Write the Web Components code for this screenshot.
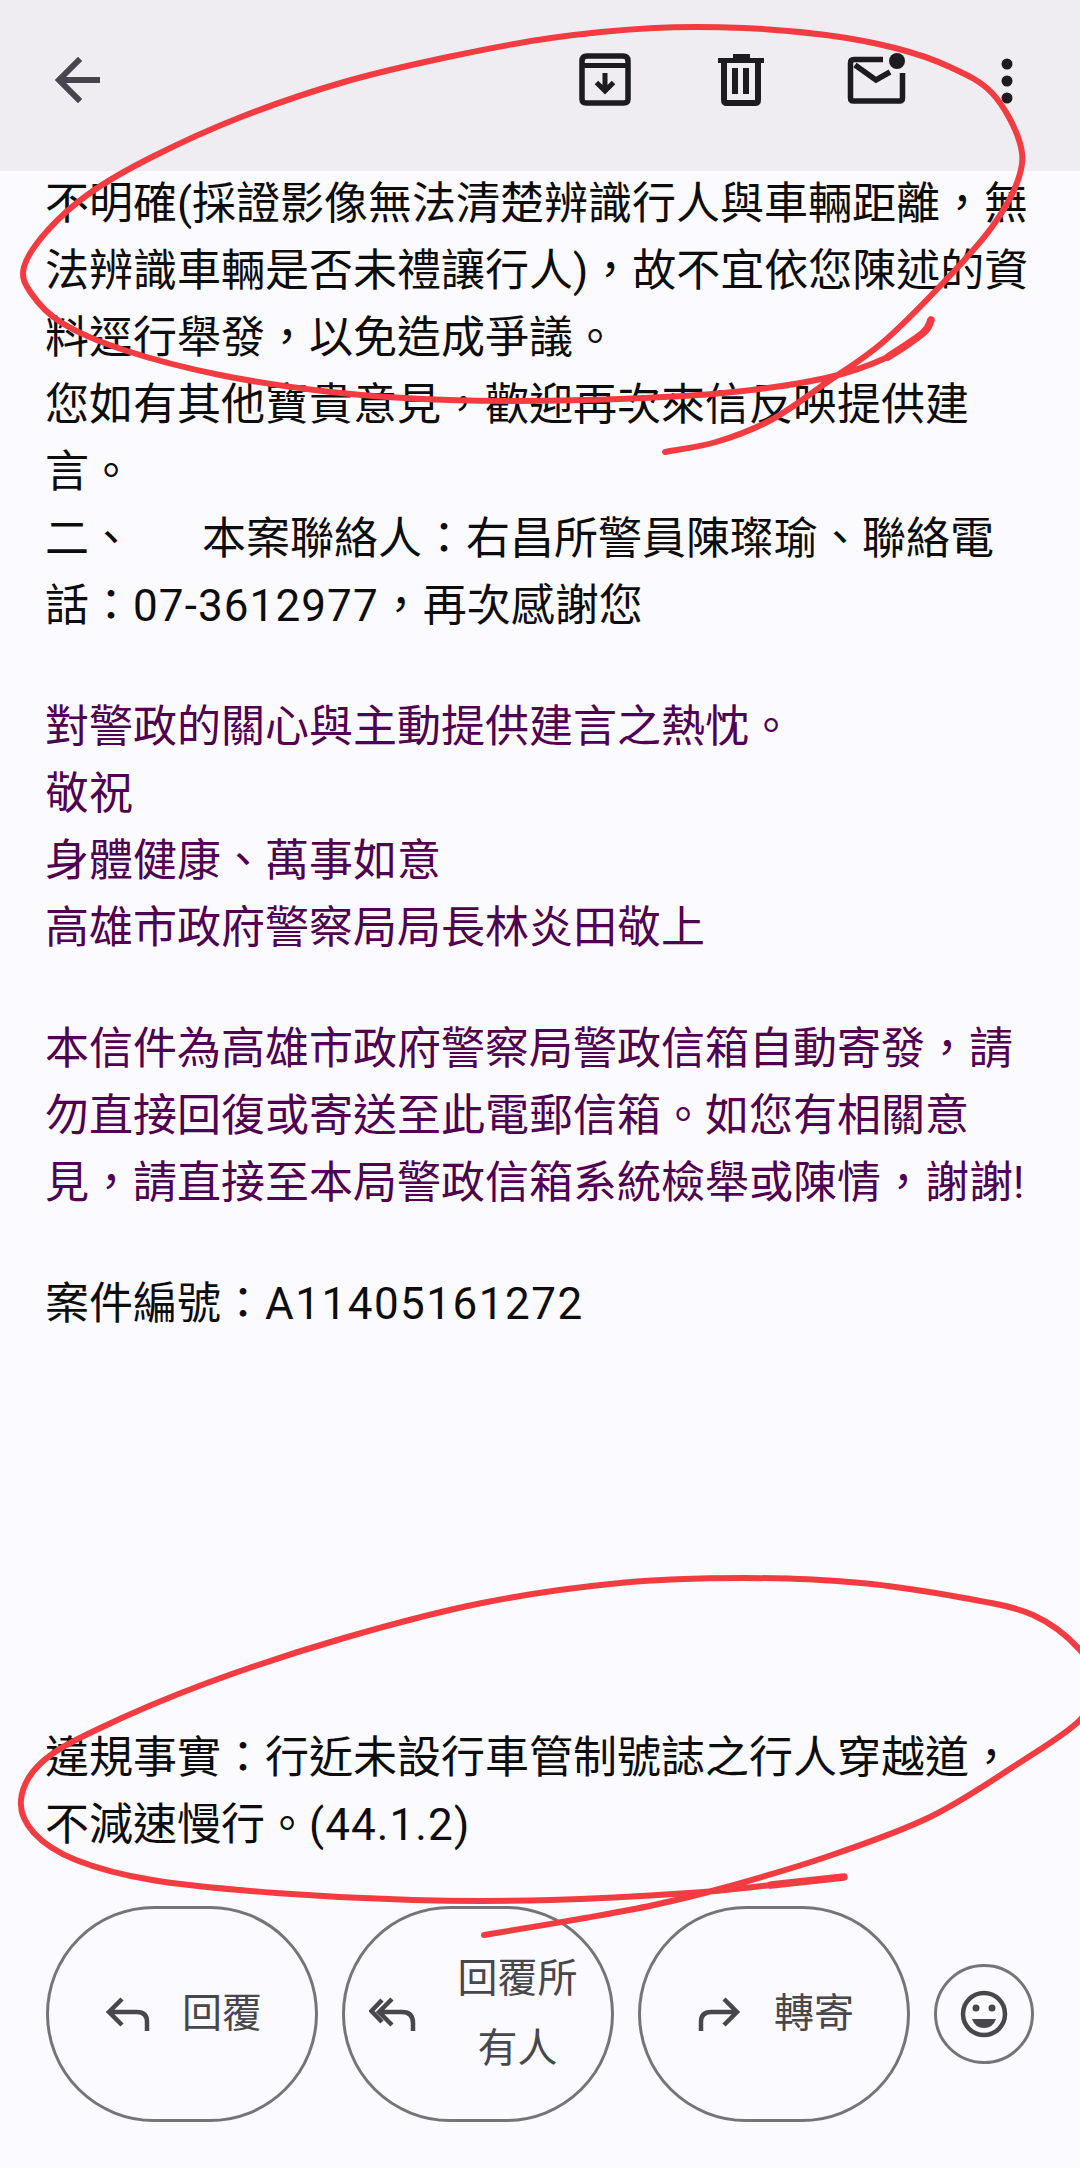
<!DOCTYPE html>
<html lang="zh-Hant">
<head>
<meta charset="utf-8">
<title>郵件</title>
<style>
  html, body { margin: 0; padding: 0; background: #fbfafe; }
  body { font-family: Roboto, "Noto Sans CJK TC", sans-serif; }
</style>
</head>
<body>
<mail-page>
  <mail-toolbar slot="top"></mail-toolbar>
  <mail-para first>不明確(採證影像無法清楚辨識行人與車輛距離&#xFF0C;無<br>法辨識車輛是否未禮讓行人)&#xFF0C;故不宜依您陳述的資<br>料逕行舉發&#xFF0C;以免造成爭議。<br>您如有其他寶貴意見&#xFF0C;歡迎再次來信反映提供建<br>言。<br>二、<mail-gap></mail-gap>本案聯絡人&#xFF1A;右昌所警員陳璨瑜、聯絡電<br>話&#xFF1A;<mail-latin>07-3612977</mail-latin>&#xFF0C;再次感謝您</mail-para>
  <mail-para quoted>對警政的關心與主動提供建言之熱忱。<br>敬祝<br>身體健康、萬事如意<br>高雄市政府警察局局長林炎田敬上</mail-para>
  <mail-para quoted>本信件為高雄市政府警察局警政信箱自動寄發&#xFF0C;請<br>勿直接回復或寄送至此電郵信箱。如您有相關意<br>見&#xFF0C;請直接至本局警政信箱系統檢舉或陳情&#xFF0C;謝謝!</mail-para>
  <mail-para>案件編號&#xFF1A;<mail-latin wide>A11405161272</mail-latin></mail-para>
  <mail-para far>違規事實&#xFF1A;行近未設行車管制號誌之行人穿越道&#xFF0C;<br>不減速慢行。<mail-latin>(44.1.2)</mail-latin></mail-para>
  <mail-actions slot="bottom">
    <mail-action icon="reply">回覆</mail-action>
    <mail-action icon="replyall">回覆所有人</mail-action>
    <mail-action icon="forward">轉寄</mail-action>
    <mail-emoji></mail-emoji>
  </mail-actions>
  <ink-marks slot="over"></ink-marks>
</mail-page>

<script>
customElements.define('mail-page', class extends HTMLElement {
  constructor() {
    super();
    this.attachShadow({mode: 'open'}).innerHTML = `
      <style>
        :host { display: flex; flex-direction: column; position: relative; width: 1080px; height: 2168px; overflow: hidden; background: #fbfafe; }
        main { padding: 0 45px; }
        .bottom { margin-top: auto; }
      </style>
      <slot name="top"></slot>
      <main><slot></slot></main>
      <div class="bottom"><slot name="bottom"></slot></div>
      <slot name="over"></slot>
    `;
  }
});

customElements.define('mail-toolbar', class extends HTMLElement {
  constructor() {
    super();
    this.attachShadow({mode: 'open'}).innerHTML = `
      <style>
        :host { display: flex; box-sizing: border-box; height: 171px; padding: 47px 40px 0 45px; background: #efedf1; flex: none; }
        svg { width: 66px; height: 66px; display: block; flex: none; }
        .right { margin-left: auto; display: flex; gap: 70px; }
        .dots { margin-left: -6px; }
      </style>
      <svg viewBox="0 0 66 66" fill="none" stroke="#49454f" stroke-width="6" stroke-linecap="square">
        <path d="M16 33H52M33 14L14 33l19 19" stroke-linejoin="miter"/>
      </svg>
      <div class="right">
        <svg viewBox="0 0 66 66" fill="none" stroke="#1c1b1f" stroke-width="5.5">
          <path d="M10 14q0-5 5-5h36q5 0 5 5v38q0 4-4 4H14q-4 0-4-4z"/>
          <path d="M10 18.5h46" stroke-width="5"/>
          <path d="M33 26v18M24.500 35.500L33 44l8.500-8.500" stroke-width="5"/>
        </svg>
        <svg viewBox="0 0 66 66" fill="#1c1b1f">
          <path d="M25 7h17v4h14v5H10v-5h15z"/>
          <path d="M16 16v37q0 3 3 3h28q3 0 3-3V16" fill="none" stroke="#1c1b1f" stroke-width="6"/>
          <path d="M24 21h6v26h-6zM35 21h6v26h-6z"/>
        </svg>
        <svg viewBox="0 0 66 66" fill="none" stroke="#1c1b1f" stroke-width="5.500">
          <path d="M39 12.500H10q-3.500 0-3.500 3.500v35q0 3 3 3h46q3 0 3-3V26"/>
          <path d="M11 18l21 15 14-8"/>
          <circle cx="53" cy="14" r="8" fill="#1c1b1f" stroke="none"/>
        </svg>
        <svg class="dots" viewBox="0 0 66 66" fill="#1c1b1f">
          <circle cx="33" cy="17" r="5.500"/><circle cx="33" cy="34" r="5.500"/><circle cx="33" cy="51" r="5.500"/>
        </svg>
      </div>
    `;
  }
});

customElements.define('mail-para', class extends HTMLElement {
  constructor() {
    super();
    this.attachShadow({mode: 'open'}).innerHTML = `
      <style>
        :host { display: block; font-size: 44px; line-height: 67px; color: #0d0d0d; white-space: nowrap; margin-top: 54px; }
        :host([first]) { margin-top: 0; }
        :host([quoted]) { color: #500050; }
        :host([far]) { margin-top: 387px; }
      </style>
      <slot></slot>
    `;
  }
});

customElements.define('mail-gap', class extends HTMLElement {
  constructor() {
    super();
    this.attachShadow({mode: 'open'}).innerHTML = `<style>:host { display: inline-block; width: 69px; }</style>`;
  }
});

// Ziffern sind im Original etwas breiter als Roboto
customElements.define('mail-latin', class extends HTMLElement {
  constructor() {
    super();
    // kein Leerraum um den Slot, sonst entsteht im Inline-Text ein Abstand
    this.attachShadow({mode: 'open'}).innerHTML = `<style>:host { letter-spacing: 1.1px; } :host([wide]) { letter-spacing: 1.5px; }</style><slot></slot>`;
  }
});

customElements.define('mail-actions', class extends HTMLElement {
  constructor() {
    super();
    this.attachShadow({mode: 'open'}).innerHTML = `
      <style>
        :host { display: flex; align-items: center; gap: 24px; padding: 0 46px 46px; }
      </style>
      <slot></slot>
    `;
  }
});

const actionIcons = {
  reply: '<svg width="48" height="36" viewBox="-4 0 48 36"><path d="M16 3L3 16l13 13M3 16h28q10 0 10 10v9"/></svg>',
  replyall: '<svg width="47" height="36" viewBox="0 0 47 36"><path d="M13 4L2.500 15 13 26M23 3L10 16l13 13M10 16h23q11 0 11 11v8"/></svg>',
  forward: '<svg width="48" height="36" viewBox="-4 0 48 36"><path d="M26 3l13 13-13 13M39 16H13Q3 16 3 26v9"/></svg>'
};

customElements.define('mail-action', class extends HTMLElement {
  constructor() {
    super();
    let icon = actionIcons[this.getAttribute('icon')];
    this.attachShadow({mode: 'open'}).innerHTML = `
      <style>
        :host { display: flex; align-items: center; justify-content: center; gap: 32px; box-sizing: border-box; width: 272px; height: 216px; padding: 0 24px; border: 3px solid #757478; border-radius: 108px; color: #47474c; font-size: 40px; text-align: center; }
        span { display: block; line-height: 70px; }
        svg { display: block; flex: none; fill: none; stroke: #47474c; stroke-width: 4.500; }
      </style>
      ${icon}
      <span><slot></slot></span>
    `;
  }
});

customElements.define('mail-emoji', class extends HTMLElement {
  constructor() {
    super();
    this.attachShadow({mode: 'open'}).innerHTML = `
      <style>
        :host { display: flex; align-items: center; justify-content: center; box-sizing: border-box; width: 100px; height: 100px; border: 3px solid #757478; border-radius: 50%; }
      </style>
      <svg width="50" height="50" viewBox="0 0 50 50">
        <circle cx="25" cy="25" r="21" fill="none" stroke="#47474c" stroke-width="4.500"/>
        <circle cx="17" cy="19" r="3.500" fill="#47474c"/>
        <circle cx="33" cy="19" r="3.500" fill="#47474c"/>
        <path d="M13 30h24q-3 9-12 9t-12-9z" fill="#47474c"/>
      </svg>
    `;
  }
});

// Rote Handschrift ueber dem Screenshot, Kurve aus Stuetzpunkten
function smoothPath(pts) {
  let d = 'M' + pts[0].join(' ');
  for (let i = 0; i < pts.length - 1; i++) {
    let p0 = pts[i - 1] || pts[i], p1 = pts[i], p2 = pts[i + 1], p3 = pts[i + 2] || p2;
    let c1 = [p1[0] + (p2[0] - p0[0]) / 6, p1[1] + (p2[1] - p0[1]) / 6];
    let c2 = [p2[0] - (p3[0] - p1[0]) / 6, p2[1] - (p3[1] - p1[1]) / 6];
    d += 'C' + c1.map(n => n.toFixed(1)).join(' ') + ' ' + c2.map(n => n.toFixed(1)).join(' ') + ' ' + p2.join(' ');
  }
  return d;
}

customElements.define('ink-marks', class extends HTMLElement {
  constructor() {
    super();
    let top = [[665,452],[716,442],[771,420],[826,383],[882,343],[943,283],[992,227],[1019,177],[1019,140],[992,93],[950,67],[895,48],[826,35],[744,28],[654,28],[551,38],[448,57],[344,82],[241,117],[152,157],[90,193],[48,230],[24,267],[31,293],[62,323],[124,350],[220,375],[331,392],[448,400],[585,400],[723,393],[826,378],[888,357],[923,333],[931,320]];
    let bottom = [[484,1935],[585,1918],[654,1905],[723,1888],[826,1857],[930,1817],[1019,1763],[1080,1720],[1095,1685],[1080,1650],[1033,1615],[964,1598],[861,1583],[744,1578],[620,1583],[482,1603],[344,1638],[207,1683],[96,1730],[41,1763],[21,1800],[34,1833],[76,1860],[152,1880],[276,1893],[413,1900],[551,1900],[689,1893],[771,1885],[844,1877]];
    this.attachShadow({mode: 'open'}).innerHTML = `
      <style>
        :host { display: block; position: absolute; inset: 0; pointer-events: none; }
        svg { display: block; }
        path { fill: none; stroke: #f33c42; stroke-width: 6; stroke-linecap: round; stroke-linejoin: round; }
        .tail { stroke-width: 7.5; }
      </style>
      <svg width="1080" height="2168" viewBox="0 0 1080 2168">
        <path d="${smoothPath(top)}"/>
        <path class="tail" d="${smoothPath(top.slice(-3))}"/>
        <path d="${smoothPath(bottom)}"/>
        <path class="tail" d="${smoothPath(bottom.slice(-2))}"/>
      </svg>
    `;
  }
});
</script>
</body>
</html>
